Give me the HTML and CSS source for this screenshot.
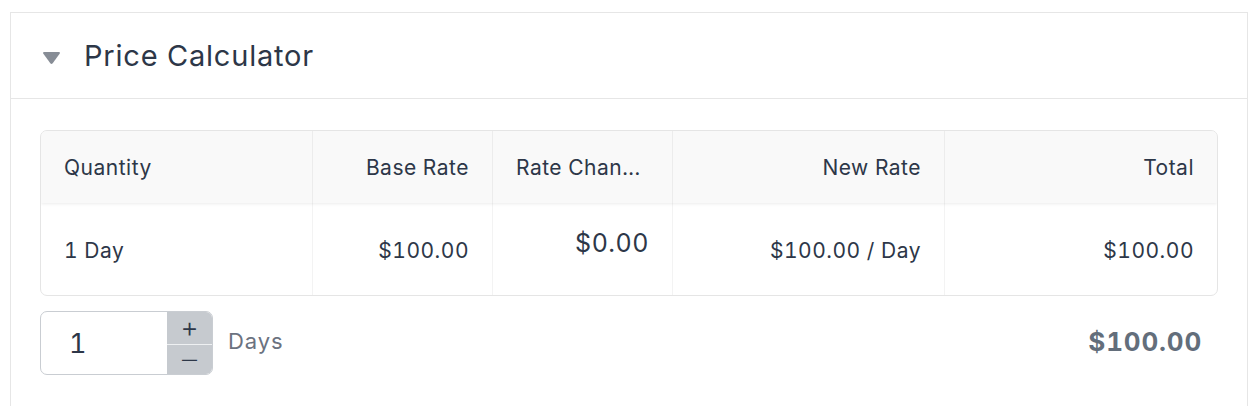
FILE: index.html
```html
<!DOCTYPE html>
<html>
<head>
<meta charset="utf-8">
<link rel="stylesheet" href="styles.css">
</head>
<body>
<div class="card">
  <div class="card-head">
    <svg class="caret" width="19" height="14" viewBox="0 0 19 14"><path d="M2.2 1 H16.8 Q18.8 1 17.6 2.8 L10.7 12.2 Q9.5 13.8 8.3 12.2 L1.4 2.8 Q0.2 1 2.2 1 Z" fill="#878d96"/></svg>
    <h2 class="title">Price Calculator</h2>
  </div>
  <div class="card-body">
    <div class="table">
      <div class="row head">
        <div class="cell c1">Quantity</div>
        <div class="cell c2 r">Base Rate</div>
        <div class="cell c3">Rate Chan...</div>
        <div class="cell c4 r">New Rate</div>
        <div class="cell c5 r">Total</div>
      </div>
      <div class="row body">
        <div class="cell c1">1 Day</div>
        <div class="cell c2 r">$100.00</div>
        <div class="cell c3 r big">$0.00</div>
        <div class="cell c4 r">$100.00 / Day</div>
        <div class="cell c5 r">$100.00</div>
      </div>
    </div>
    <div class="footer">
      <div class="qty">
        <div class="num">1</div>
        <div class="spin">
          <div class="btn plus">+</div>
          <div class="btn minus">&#8212;</div>
        </div>
      </div>
      <div class="unit">Days</div>
      <div class="grand">$100.00</div>
    </div>
  </div>
</div>
</body>
</html>
```
FILE: styles.css
```css
html, body { margin: 0; padding: 0; background: #fff; }
body {
  font-family: Inter, "Noto Sans", sans-serif;
  color: #2d3748;
  padding: 12px 12px 0 10px;
  font-variant-numeric: tabular-nums;
}
.card {
  border: 1px solid #e6e6e6;
  border-bottom: none;
  height: 400px;
  box-sizing: border-box;
}
.card-head {
  height: 85px;
  border-bottom: 1px solid #e6e6e6;
  display: flex;
  align-items: center;
  padding-left: 31px;
}
.caret { margin-right: 23px; margin-top: 4px; }
.title {
  margin: 0;
  font-weight: 400;
  font-size: 29px;
  color: #2d3748;
  letter-spacing: 0.8px;
}
.card-body { padding: 31px 29px 0 29px; }
.table {
  border: 1px solid #e5e5e5;
  border-radius: 7px;
  overflow: hidden;
}
.row { display: flex; }
.row.head {
  height: 72px;
  background: #f9f9f9;
  box-shadow: 0 1px 3px rgba(0,0,0,0.08);
  position: relative;
}
.row.body { height: 92px; }
.cell {
  display: flex;
  align-items: center;
  padding: 0 23px;
  font-size: 21px;
  letter-spacing: 0.5px;
  box-sizing: border-box;
  white-space: nowrap;
}
.row.body .cell { padding-top: 2px; }
.cell + .cell { border-left: 1px solid #ececec; }
.row.body .cell + .cell { border-left-color: #f3f3f3; }
.c1 { width: 271px; }
.c2 { width: 180px; }
.c3 { width: 180px; }
.c4 { width: 272px; }
.c5 { flex: 1; }
.r { justify-content: flex-end; }
.row.body .big { font-size: 25px; padding-top: 0; padding-bottom: 12px; }
.footer {
  display: flex;
  align-items: center;
  margin-top: 15px;
  padding-right: 16px;
}
.qty {
  display: flex;
  width: 173px;
  height: 64px;
  border: 1px solid #c9cdd2;
  border-radius: 7px;
  overflow: hidden;
  box-sizing: border-box;
}
.num {
  flex: 1;
  display: flex;
  align-items: center;
  padding-left: 28px;
  font-size: 27px;
  color: #2d3748;
}
.spin {
  width: 45px;
  display: flex;
  flex-direction: column;
  background: #c6cacf;
}
.btn {
  flex: 1;
  display: flex;
  align-items: center;
  justify-content: center;
  color: #2d3748;
  line-height: 1;
}
.btn.plus { font-size: 28px; font-weight: 300; padding-bottom: 2px; }
.btn.minus { border-top: 1px solid #eef0f2; font-size: 15px; font-weight: 400; }
.unit {
  margin-left: 15px;
  font-size: 22px;
  letter-spacing: 0.9px;
  color: #6b7280;
  margin-top: -4px;
}
.grand {
  margin-left: auto;
  font-size: 26px;
  font-weight: 700;
  letter-spacing: 0.8px;
  color: #636e7b;
  margin-top: -4px;
}
```
